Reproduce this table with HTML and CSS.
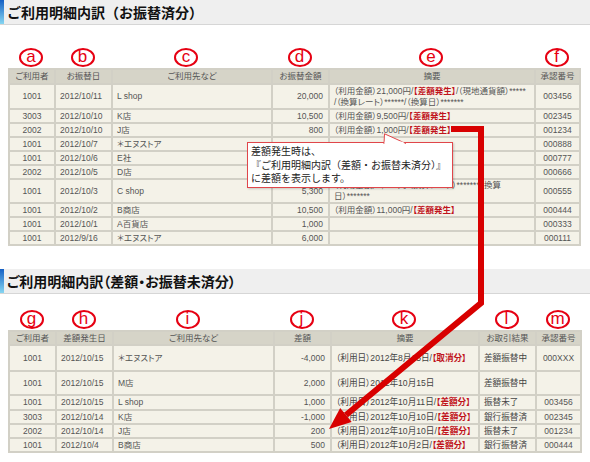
FILE: index.html
```html
<!DOCTYPE html>
<html lang="ja">
<head>
<meta charset="utf-8">
<title>ご利用明細内訳</title>
<link rel="stylesheet" href="styles.css">
</head>
<body>
<h2 class="title">ご利用明細内訳（お振替済分）</h2>
<div class="labels labels-1">
  <span class="lab">a</span><span class="lab">b</span><span class="lab lab-shift">c</span><span class="lab">d</span><span class="lab">e</span><span class="lab">f</span>
</div>
<table class="tbl tbl-1">
  <colgroup><col class="w46"><col class="w57"><col class="w160"><col class="w57"><col class="w206"><col class="w45"></colgroup>
  <tr class="h15"><th>ご利用者</th><th>お振替日</th><th>ご利用先など</th><th>お振替金額</th><th>摘要</th><th>承認番号</th></tr>
  <tr class="h25"><td class="c">1001</td><td>2012/10/11</td><td>L shop</td><td class="r">20,000</td><td>（利用金額）21,000円/<span class="red">【差額発生】</span>/（現地通貨額）*****<br>/（換算レート）******/（換算日）*******</td><td class="c">003456</td></tr>
  <tr class="h14"><td class="c">3003</td><td>2012/10/10</td><td>K店</td><td class="r">10,500</td><td>（利用金額）9,500円/<span class="red">【差額発生】</span></td><td class="c">002345</td></tr>
  <tr class="h14"><td class="c">2002</td><td>2012/10/10</td><td>J店</td><td class="r">800</td><td>（利用金額）1,000円/<span class="red">【差額発生】</span></td><td class="c">001234</td></tr>
  <tr class="h14"><td class="c">1001</td><td>2012/10/7</td><td>＊エヌストア</td><td class="r"></td><td></td><td class="c">000888</td></tr>
  <tr class="h14"><td class="c">1001</td><td>2012/10/6</td><td>E社</td><td class="r"></td><td></td><td class="c">000777</td></tr>
  <tr class="h14"><td class="c">2002</td><td>2012/10/5</td><td>D店</td><td class="r"></td><td></td><td class="c">000666</td></tr>
  <tr class="h24"><td class="c">1001</td><td>2012/10/3</td><td>C shop</td><td class="r">5,300</td><td>（利用金額）5,300円/（換算レート）*******（換算<br>日）*******</td><td class="c">000555</td></tr>
  <tr class="h14"><td class="c">1001</td><td>2012/10/2</td><td>B商店</td><td class="r">10,500</td><td>（利用金額）11,000円/<span class="red">【差額発生】</span></td><td class="c">000444</td></tr>
  <tr class="h14"><td class="c">1001</td><td>2012/10/1</td><td>A百貨店</td><td class="r">1,000</td><td></td><td class="c">000333</td></tr>
  <tr class="h14"><td class="c">1001</td><td>2012/9/16</td><td>＊エヌストア</td><td class="r">6,000</td><td></td><td class="c">000111</td></tr>
</table>

<h2 class="title title-2">ご利用明細内訳（差額・お振替未済分）</h2>
<div class="labels labels-2">
  <span class="lab">g</span><span class="lab">h</span><span class="lab lab-shift">i</span><span class="lab">j</span><span class="lab">k</span><span class="lab">l</span><span class="lab">m</span>
</div>
<table class="tbl tbl-2">
  <colgroup><col class="w47"><col class="w57"><col class="w161"><col class="w57"><col class="w148"><col class="w57"><col class="w45"></colgroup>
  <tr class="h14"><th>ご利用者</th><th>差額発生日</th><th>ご利用先など</th><th>差額</th><th>摘要</th><th>お取引結果</th><th>承認番号</th></tr>
  <tr class="h26"><td class="c">1001</td><td>2012/10/15</td><td>＊エヌストア</td><td class="r">-4,000</td><td class="big">（利用日）2012年8月15日/<span class="red">【取消分】</span></td><td class="big">差額振替中</td><td class="c">000XXX</td></tr>
  <tr class="h24"><td class="c">1001</td><td>2012/10/15</td><td>M店</td><td class="r">2,000</td><td class="big">（利用日）2012年10月15日</td><td class="big">差額振替中</td><td class="c"></td></tr>
  <tr class="h15"><td class="c">1001</td><td>2012/10/15</td><td>L shop</td><td class="r">1,000</td><td class="big">（利用日）2012年10月11日/<span class="red">【差額分】</span></td><td class="big">振替未了</td><td class="c">003456</td></tr>
  <tr class="h14"><td class="c">3003</td><td>2012/10/14</td><td>K店</td><td class="r">-1,000</td><td class="big">（利用日）2012年10月10日/<span class="red">【差額分】</span></td><td class="big">銀行振替済</td><td class="c">002345</td></tr>
  <tr class="h14"><td class="c">2002</td><td>2012/10/14</td><td>J店</td><td class="r">200</td><td class="big">（利用日）2012年10月10日/<span class="red">【差額分】</span></td><td class="big">振替未了</td><td class="c">001234</td></tr>
  <tr class="h14"><td class="c">1001</td><td>2012/10/4</td><td>B商店</td><td class="r">500</td><td class="big">（利用日）2012年10月2日/<span class="red">【差額分】</span></td><td class="big">銀行振替済</td><td class="c">000444</td></tr>
</table>

<div class="callout">
  <svg class="tail" width="24" height="11" viewBox="0 0 24 11"><path d="M1 11 L1.5 0.8 L23 10.5" fill="#fff" stroke="#e0464a" stroke-width="1"/><rect x="1.6" y="8.6" width="19" height="2.4" fill="#fff"/></svg>
  差額発生時は、<br>『ご利用明細内訳（差額・お振替未済分）』<br>に差額を表示します。
</div>

<svg class="arrow" width="590" height="462" viewBox="0 0 590 462">
  <polyline points="451,129 481,129 481,303 346,415" fill="none" stroke="#d80000" stroke-width="6" stroke-linejoin="miter"/>
  <polygon points="329,429 351.7,421.9 340.2,408" fill="#d80000"/>
</svg>
</body>
</html>
```
FILE: styles.css
```css
* { box-sizing: border-box; }
html, body { margin: 0; padding: 0; }
body {
  width: 590px;
  height: 462px;
  overflow: hidden;
  position: relative;
  background: #fff;
  color: #555;
  font-family: "Liberation Sans", "Noto Sans CJK JP", sans-serif;
}
.title {
  margin: 0;
  height: 25px;
  padding-left: 7px;
  font: bold 14px/24px "Noto Sans CJK JP", sans-serif;
  color: #111;
  background: linear-gradient(#1560c4, #86d6f2) 0 0 / 4px 24px no-repeat, #efefef;
  border-bottom: 1px solid #d6d6d6;
}
.title-2 {
  margin-top: 23px;
  font-feature-settings: "palt";
}
.labels {
  display: grid;
  margin: 23px 0 0 8px;
  height: 20px;
  align-items: start;
}
.labels-1 { grid-template-columns: 46px 57px 160px 57px 206px 45px; }
.labels-2 { grid-template-columns: 47px 57px 161px 57px 148px 57px 45px; margin-top: 16px; }
.lab {
  justify-self: center;
  width: 24px;
  height: 19px;
  border: 2px solid #e60012;
  border-radius: 50%;
  color: #e60012;
  font: 17px/1 "Liberation Sans", sans-serif;
  display: flex;
  align-items: center;
  justify-content: center;
  padding-bottom: 2px;
}
.lab-shift { position: relative; left: -5px; }

.tbl {
  margin-left: 8px;
  border-collapse: collapse;
  table-layout: fixed;
  font-size: 8.5px;
  line-height: 11px;
  font-feature-settings: "palt";
}
.tbl-1 { width: 571px; }
.tbl-2 { width: 572px; }
.tbl th, .tbl td {
  border: 2px solid #d2d0c6;
  padding: 0 4px;
  vertical-align: middle;
  white-space: nowrap;
  overflow: hidden;
  text-align: left;
}
.tbl th {
  background: #d6d4c8;
  font-weight: normal;
  color: #555;
  text-align: center;
}
.tbl td { background: #f4f2e8; }
.tbl td.c { text-align: center; }
.tbl td.r { text-align: right; padding-right: 5px; }
.tbl td.big { font-size: 8.6px; color: #444; }
.red { color: #c0141c; font-weight: bold; }

.w45 { width: 45px; } .w46 { width: 46px; } .w47 { width: 47px; }
.w57 { width: 57px; } .w148 { width: 148px; } .w160 { width: 160px; }
.w161 { width: 161px; } .w206 { width: 206px; }
.h14 { height: 14px; } .h15 { height: 15px; } .h24 { height: 24px; }
.h25 { height: 25px; } .h26 { height: 26px; }

.callout {
  position: absolute;
  left: 247px;
  top: 142px;
  width: 206px;
  height: 46px;
  background: #fff;
  border: 1px solid #e0464a;
  box-shadow: 1px 1px 2px rgba(0,0,0,.18);
  padding: 1px 3px;
  font: 10px/13.5px "Noto Sans CJK JP", sans-serif;
  color: #222;
}
.tail {
  position: absolute;
  left: 135px;
  top: -10px;
}
.arrow {
  position: absolute;
  left: 0;
  top: 0;
  pointer-events: none;
}
```
